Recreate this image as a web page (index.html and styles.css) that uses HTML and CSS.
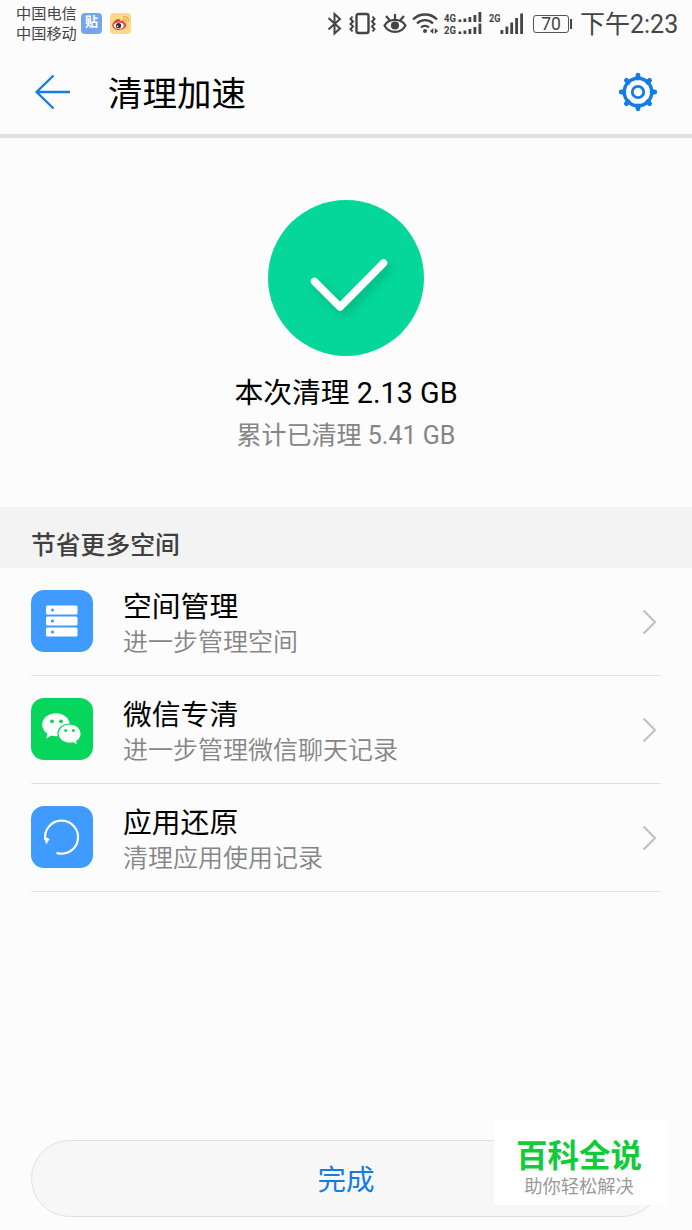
FILE: index.html
```html
<!doctype html>
<html lang="zh-CN">
<head>
    <meta charset="UTF-8">
    <meta name="viewport" content="width=device-width, initial-scale=1.0">
    <title>清理加速</title>
    <link rel="stylesheet" href="styles.css">
</head>
<body>
    <div class="page">
        <!-- 状态栏 -->
        <div class="status">
            <div class="carriers">
                <div>中国电信</div>
                <div>中国移动</div>
            </div>
            <div class="app-badge tieba"><span>贴</span></div>
            <svg class="app-badge" width="21" height="21" viewBox="0 0 21 21">
                <rect width="21" height="21" rx="4" fill="#fbd98b"/>
                <path d="M2.300 12.500C2.300 9 7 5.200 9.200 6c1 .4.8 1.400.6 2 2-.9 4.600-.8 4.300 1.400 1.600.5 2.500 1.500 2.200 3.200-.4 2.400-3.700 4.400-7.300 4.400-3.700 0-6.700-1.900-6.700-4.500z" fill="#dc4a3e"/>
                <ellipse cx="8.800" cy="12.700" rx="5" ry="3.300" fill="#fff"/>
                <circle cx="8.500" cy="12.700" r="2.600" fill="#332b2b"/>
                <circle cx="7.700" cy="13.200" r=".8" fill="#fff"/>
                <path d="M13.600 6.200c1.700-.3 2.900.9 2.500 2.600M13.600 3.600c3.200-.5 5.500 2 4.800 5" fill="none" stroke="#f3a64a" stroke-width="1.200" stroke-linecap="round"/>
            </svg>

            <div class="indicators">
                <svg width="16" height="24" viewBox="0 0 16 24" fill="none" stroke="#444" stroke-width="2">
                    <path d="M1.500 6L13 16.500 7.500 21.500V2L13 7 1.500 17.500"/>
                </svg>
                <svg class="vibrate" width="28" height="24" viewBox="0 0 28 24" fill="none" stroke="#444" stroke-width="2">
                    <rect x="7.500" y="2" width="12" height="19" rx="2" stroke-width="2.400"/>
                    <path d="M3.500 4.500L1.500 7 4 9.500 1.500 12 4 14.500 1.500 17 3.500 19.500M23.500 4.500L25.500 7 23 9.500 25.500 12 23 14.500 25.500 17 23.500 19.500"/>
                </svg>
                <svg class="eye" width="24" height="24" viewBox="0 0 24 24" fill="none" stroke="#444" stroke-width="2.200">
                    <path d="M1.500 13.500C6 6 18 6 22.500 13.500 18 22 6 22 1.500 13.500z"/>
                    <circle cx="12" cy="13.500" r="4.100" fill="#444" stroke="none"/>
                    <path d="M12 8V2M6.500 8L3 4M17.500 8L21 4"/>
                </svg>
                <svg class="wifi" width="28" height="24" viewBox="0 0 28 24" fill="none" stroke="#444" stroke-width="2.300">
                    <path d="M1 7.500C7.500.8 18.500.8 25 7.500M5 11.500C9.500 7 16.500 7 21 11.500M9 15.500C11.200 13.300 14.800 13.300 17 15.500"/>
                    <circle cx="13" cy="19" r="2" fill="#444" stroke="none"/>
                    <path d="M21.300 16v6l-3.300-3zM22.800 16v6l3.300-3z" fill="#444" stroke="none"/>
                </svg>
                <svg class="dual" width="38" height="24" viewBox="0 0 38 24" fill="#444">
                    <text class="net" x="0" y="9.800" textLength="12" lengthAdjust="spacingAndGlyphs">4G</text>
                    <text class="net" x="0" y="22" textLength="12" lengthAdjust="spacingAndGlyphs">2G</text>
                    <path d="M14.500 7.500h2.800V10h-2.800zM19.500 6.500h2.800V10h-2.800zM24.500 5h2.800v5h-2.800zM29.500 3h2.800v7h-2.800zM34.500 0h2.800v10h-2.800z"/>
                    <path d="M14.500 19.500h2.800V22h-2.800zM19.500 18.500h2.800V22h-2.800zM24.500 17h2.800v5h-2.800zM29.500 15h2.800v7h-2.800zM34.500 11.500h2.800V22h-2.800z"/>
                </svg>
                <svg class="single" width="36" height="24" viewBox="0 0 36 24" fill="#444">
                    <text class="net" x="0" y="9.800" textLength="11.500" lengthAdjust="spacingAndGlyphs">2G</text>
                    <path d="M11.500 18h2.800v4h-2.800zM16.500 14.500h2.800V22h-2.800zM21.300 10.500h2.800V22h-2.800zM26.200 6H29v16h-2.800zM31.200 1.500H34V22h-2.800z"/>
                </svg>
                <div class="battery">70</div>
                <div class="clock">下午2:23</div>
            </div>
        </div>

        <!-- 标题栏 -->
        <div class="header">
            <svg class="back" width="38" height="38" viewBox="0 0 38 38" fill="none" stroke="#147ce5" stroke-width="2.400" stroke-linejoin="round">
                <path d="M20.500 2.500L3.500 19l17 16.500M3.500 19H37"/>
            </svg>
            <h1>清理加速</h1>
            <svg class="gear" width="40" height="40" viewBox="0 0 40 40" fill="none" stroke="#147ce5">
                <circle cx="20" cy="20" r="13.800" stroke-width="3.400"/>
                <circle cx="20" cy="20" r="5.700" stroke-width="2.800"/>
                <path d="M20 3.200V6M20 34v2.800M3.200 20H6M34 20h2.800M8.400 8.400l1.800 1.800M29.800 29.800l1.800 1.800M8.400 31.600l1.800-1.800M29.800 10.200l1.800-1.800" stroke-width="4.800" stroke-linecap="round"/>
            </svg>
        </div>

        <!-- 清理结果 -->
        <div class="result">
            <div class="circle">
                <svg width="156" height="156" viewBox="0 0 156 156" fill="none">
                    <path class="tick" d="M46.500 81.500L72 107l43.500-44" stroke="#fff" stroke-width="7.500" stroke-linecap="round" stroke-linejoin="round"/>
                </svg>
            </div>
            <div class="now">本次清理 2.13 GB</div>
            <div class="total">累计已清理 5.41 GB</div>
        </div>

        <div class="section">节省更多空间</div>
        <div class="list">
            <div class="item">
                <svg class="icon" width="62" height="62" viewBox="0 0 62 62">
                    <rect width="62" height="62" rx="13" fill="#3f9bff"/>
                    <g fill="#fff">
                        <rect x="15" y="15.500" width="31.500" height="9" rx="1.500"/>
                        <rect x="15" y="26.500" width="31.500" height="9" rx="1.500"/>
                        <rect x="15" y="37.500" width="31.500" height="9" rx="1.500"/>
                    </g>
                    <g fill="#3f9bff">
                        <circle cx="21.500" cy="20" r="1.600"/>
                        <circle cx="21.500" cy="31" r="1.600"/>
                        <circle cx="21.500" cy="42" r="1.600"/>
                    </g>
                </svg>
                <div class="text">
                    <div class="name">空间管理</div>
                    <div class="desc">进一步管理空间</div>
                </div>
                <svg class="arrow" width="16" height="26" viewBox="0 0 16 26"><path d="M2.500 1.500L14 13 2.500 24.500"/></svg>
            </div>
            <div class="item">
                <svg class="icon" width="62" height="62" viewBox="0 0 62 62">
                    <rect width="62" height="62" rx="13" fill="#07d65d"/>
                    <path d="M25 15.300c-7.700 0-13.800 5-13.800 11.500 0 3.700 2 6.800 5.300 8.900l-1.300 4.800 5.300-2.900c1.400.4 2.900.6 4.500.6 7.700 0 13.800-5.100 13.800-11.400S32.700 15.300 25 15.300z" fill="#fff"/>
                    <path d="M38.600 26c-6.500 0-11.600 4.300-11.600 9.700s5.100 9.700 11.600 9.700c1.300 0 2.500-.2 3.700-.5l4.400 2.300-1.100-3.800c2.800-1.800 4.600-4.600 4.600-7.700 0-5.400-5.100-9.700-11.600-9.700z" fill="#fff" stroke="#07d65d" stroke-width="1.200"/>
                    <g fill="#07d65d">
                        <circle cx="21" cy="23.300" r="1.900"/>
                        <circle cx="30" cy="23.300" r="1.900"/>
                        <circle cx="34.700" cy="32.600" r="1.500"/>
                        <circle cx="42.300" cy="32.600" r="1.500"/>
                    </g>
                </svg>
                <div class="text">
                    <div class="name">微信专清</div>
                    <div class="desc">进一步管理微信聊天记录</div>
                </div>
                <svg class="arrow" width="16" height="26" viewBox="0 0 16 26"><path d="M2.500 1.500L14 13 2.500 24.500"/></svg>
            </div>
            <div class="item">
                <svg class="icon" width="62" height="62" viewBox="0 0 62 62">
                    <rect width="62" height="62" rx="13" fill="#3f9bff"/>
                    <path d="M25.500 46.900A16.500 16.500 0 1 0 14.300 34" fill="none" stroke="#fff" stroke-width="2.200"/>
                    <path d="M13.200 30.500l5.400 2.500-3.500 5.500z" fill="#fff"/>
                </svg>
                <div class="text">
                    <div class="name">应用还原</div>
                    <div class="desc">清理应用使用记录</div>
                </div>
                <svg class="arrow" width="16" height="26" viewBox="0 0 16 26"><path d="M2.500 1.500L14 13 2.500 24.500"/></svg>
            </div>
        </div>

        <button class="done" type="button">完成</button>

        <div class="brand">
            <div class="brand-name">百科全说</div>
            <div class="brand-sub">助你轻松解决</div>
        </div>
    </div>
</body>
</html>
```
FILE: styles.css
```css
* {
    margin: 0;
    padding: 0;
    box-sizing: border-box;
}

body {
    background: #fcfcfc;
    font-family: Roboto, "Noto Sans CJK SC", sans-serif;
    color: #000;
}

svg {
    display: block;
    flex: none;
    overflow: visible;
}

.page {
    position: relative;
    display: flex;
    flex-direction: column;
    width: 692px;
    height: 1230px;
    overflow: hidden;
    white-space: nowrap;
}

/* 状态栏 */
.status {
    display: flex;
    align-items: center;
    height: 47px;
    padding: 0 15px 0 16px;
    color: #444;
}

.carriers {
    width: 61px;
    font-size: 15.2px;
    line-height: 20px;
}

.app-badge {
    width: 21px;
    height: 21px;
    margin-left: 4px;
}

.app-badge + .app-badge {
    margin-left: 8px;
}

.tieba {
    border-radius: 4px;
    background: #76a5f0;
    color: #fff;
    font-size: 13px;
    font-weight: 700;
    line-height: 17px;
    text-align: center;
}

.indicators {
    display: flex;
    align-items: center;
    margin-left: auto;
}

.vibrate {
    margin-left: 6px;
}

.eye {
    margin-left: 6px;
}

.wifi {
    margin-left: 5px;
}

.dual {
    margin-left: 4px;
}

.single {
    margin-left: 7px;
}

.net {
    font-family: Roboto, sans-serif;
    font-size: 11px;
    font-weight: 700;
}

.battery {
    position: relative;
    width: 36px;
    height: 18px;
    margin: 0 11px 0 8px;
    border: 1px solid #555;
    border-radius: 3px;
    font-size: 17.5px;
    line-height: 17px;
    text-align: center;
}

.battery::after {
    content: "";
    position: absolute;
    top: 3px;
    right: -4px;
    width: 2px;
    height: 10px;
    background: #444;
}

.clock {
    width: 97px;
    padding-top: 2px;
    font-size: 25px;
    line-height: 46px;
}

/* 标题栏 */
.header {
    display: flex;
    align-items: center;
    height: 91px;
    padding: 2px 34px 0 33px;
    border-bottom: 4px solid #e1e1e1;
}

.header h1 {
    margin-left: 37px;
    padding-top: 5px;
    font-size: 34.5px;
    font-weight: 400;
    line-height: 50px;
}

.gear {
    margin-left: auto;
}

/* 清理结果 */
.result {
    display: flex;
    flex-direction: column;
    align-items: center;
    height: 369px;
    padding-top: 62px;
}

.circle {
    width: 156px;
    height: 156px;
    border-radius: 50%;
    background: #04d799;
}

.tick {
    filter: drop-shadow(4px 5px 4px rgba(0, 90, 60, 0.25));
}

.now {
    margin-top: 16px;
    font-size: 28.8px;
    line-height: 42px;
}

.total {
    margin-top: 3px;
    color: #858585;
    font-size: 25px;
    line-height: 38px;
}

/* 列表 */
.section {
    height: 61px;
    padding: 15px 31px 0;
    background: #f3f3f3;
    color: #404040;
    font-size: 24.8px;
    font-weight: 500;
    line-height: 47px;
}

.list {
    padding: 0 31px;
}

.item {
    display: flex;
    align-items: center;
    height: 108px;
    border-bottom: 1px solid #e2e2e2;
}

.icon {
    margin-top: -1px;
}

.text {
    margin-left: 30px;
    padding-top: 5px;
}

.name {
    font-size: 28.8px;
    line-height: 38px;
}

.desc {
    color: #858585;
    font-size: 25px;
    font-weight: 350;
    line-height: 34px;
}

.arrow {
    margin-left: auto;
    margin-right: 4px;
    fill: none;
    stroke: #c2c2c2;
    stroke-width: 2.2;
}

.done {
    height: 77px;
    margin: auto 31px 13px;
    padding-bottom: 2px;
    border: 1.5px solid #e0e0e0;
    border-radius: 39px;
    background: #f7f7f7;
    color: #147ce5;
    font-family: inherit;
    font-size: 28.5px;
}

/* 右下角标识 */
.brand {
    position: absolute;
    right: 25px;
    bottom: 25px;
    width: 173px;
    height: 84px;
    padding-top: 15px;
    background: #fff;
    text-align: center;
}

.brand-name {
    margin-right: 3px;
    color: #12cb3b;
    font-size: 31.5px;
    font-weight: 700;
    line-height: 41px;
}

.brand-sub {
    margin-right: 3px;
    color: #999;
    font-size: 18.3px;
    line-height: 20px;
}
```
